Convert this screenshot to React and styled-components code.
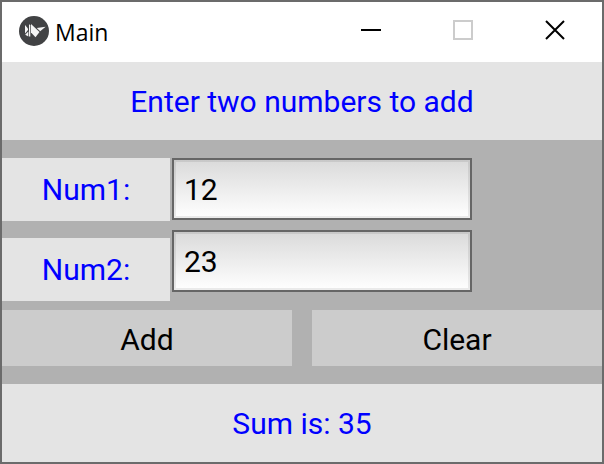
import { useState } from 'react';
import styled, { createGlobalStyle } from 'styled-components';

export default function App() {
    const [num1, setNum1] = useState('12');
    const [num2, setNum2] = useState('23');
    const [sum, setSum] = useState('35');

    const onAdd = (e) => {
        e.preventDefault();
        setSum(String(Number(num1) + Number(num2)));
    };

    const onClear = () => {
        setNum1('');
        setNum2('');
        setSum('');
    };

    return (
        <>
            <GlobalStyle />
            <Window>
                <TitleBar />
                <Banner as="h1">Enter two numbers to add</Banner>
                <Form onSubmit={onAdd}>
                    <Fields>
                        <Column $gap={17}>
                            <Label htmlFor="num1">Num1:</Label>
                            <Label htmlFor="num2">Num2:</Label>
                        </Column>
                        <Column $gap={10}>
                            <Input id="num1" value={num1} onChange={(e) => setNum1(e.target.value)} />
                            <Input id="num2" value={num2} onChange={(e) => setNum2(e.target.value)} />
                        </Column>
                    </Fields>
                    <Actions>
                        <ActionButton type="submit">Add</ActionButton>
                        <ActionButton type="button" onClick={onClear}>Clear</ActionButton>
                    </Actions>
                </Form>
                <Banner as="output">Sum is: {sum}</Banner>
            </Window>
        </>
    );
}

function TitleBar() {
    return (
        <Bar>
            <Logo />
            <Title>Main</Title>
            <WindowButton type="button" aria-label="Minimize">
                <svg width="20" height="20" viewBox="0 0 20 20">
                    <path d="M0 10H20" stroke="#000" strokeWidth="2" />
                </svg>
            </WindowButton>
            <WindowButton type="button" aria-label="Maximize" disabled>
                <svg width="20" height="20" viewBox="0 0 20 20">
                    <path d="M1 1H19V19H1Z" fill="none" stroke="#ccc" strokeWidth="2" />
                </svg>
            </WindowButton>
            <WindowButton type="button" aria-label="Close">
                <svg width="20" height="20" viewBox="0 0 20 20">
                    <path d="M1 1L19 19M19 1L1 19" stroke="#000" strokeWidth="2" />
                </svg>
            </WindowButton>
        </Bar>
    );
}

function Logo() {
    return (
        <svg width="30" height="30" viewBox="0 0 30 30" aria-hidden="true">
            <circle cx="15" cy="15" r="15" fill="#414244" />
            <g fill="#f4f4f4">
                <path d="M6 9L9 12.500V14L6 17.500Z" />
                <path d="M9.300 15.500V20.500L6.200 18.800Z" />
                <path d="M10 8L11.300 9.500V20.500H10Z" />
                <path d="M12 8L20.500 16L16.500 21.200L12 16.500Z" />
                <path d="M17.800 12L26.600 10.800L21.200 15.300Z" />
            </g>
        </svg>
    );
}

// Styled components

const GlobalStyle = createGlobalStyle`
    * {
        box-sizing: border-box;
    }

    body {
        margin: 0;
        font-family: Roboto, 'Liberation Sans', sans-serif;
        font-size: 30px;
        line-height: 36px;
    }
`;

const Window = styled.main`
    display: flex;
    flex-direction: column;
    min-height: 100vh;
    border: 2px solid #6b6b6b;
    background: #b1b1b1;
`;

const Bar = styled.header`
    display: flex;
    align-items: center;
    height: 60px;
    padding: 0 1px 2px 17px;
    background: #fff;
`;

const Title = styled.span`
    flex: 1;
    padding: 2px 0 0 6px;
    color: #000;
    font-family: 'Open Sans', 'Noto Sans', sans-serif;
    font-size: 23px;
    line-height: 32px;
`;

const WindowButton = styled.button`
    display: flex;
    align-items: center;
    justify-content: center;
    width: 92px;
    height: 100%;
    padding: 0 0 2px;
    border: none;
    background: transparent;
`;

const Banner = styled.div`
    display: flex;
    align-items: center;
    justify-content: center;
    min-height: 78px;
    margin: 0;
    padding-top: 2px;
    background: #e4e4e4;
    color: #00f;
    font-size: 30px;
    font-weight: 400;
    white-space: pre;
`;

const Form = styled.form`
    display: flex;
    flex: 1;
    flex-direction: column;
    gap: 9px;
    padding: 18px 0;
`;

const Fields = styled.div`
    display: grid;
    grid-template-columns: 28% 50%;
    align-items: start;
    gap: 2px;
`;

const Column = styled.div`
    display: flex;
    flex-direction: column;
    gap: ${({ $gap }) => $gap}px;
`;

const Label = styled.label`
    display: flex;
    align-items: center;
    justify-content: center;
    height: 63px;
    padding-top: 1px;
    background: #e4e4e4;
    color: #00f;
`;

const Input = styled.input`
    width: 100%;
    height: 62px;
    padding: 0 10px;
    border: 2px solid #666;
    border-radius: 0;
    outline: none;
    background: linear-gradient(#dadada, #fff);
    box-shadow: inset 0 0 0 2px rgba(0, 0, 0, 0.08);
    color: #000;
    font: inherit;
`;

const Actions = styled.div`
    display: flex;
    gap: 20px;
`;

const ActionButton = styled.button`
    flex: 1;
    height: 56px;
    padding: 3px 0 0;
    border: none;
    background: #ccc;
    color: #000;
    font: inherit;
    cursor: pointer;
`;
